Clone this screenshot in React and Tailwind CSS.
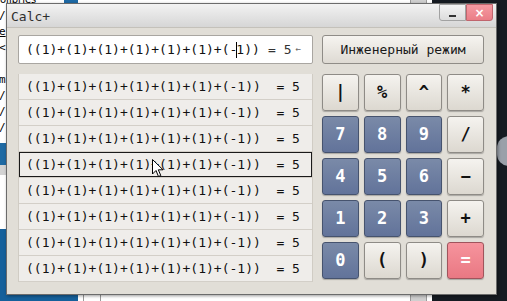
import React from 'react';

const mono = "font-['DejaVu_Sans_Mono','Liberation_Mono',monospace]";
const expr = '((1)+(1)+(1)+(1)+(1)+(1)+(-1))';

const keys = [
  { label: '|', kind: 'op' },
  { label: '%', kind: 'op' },
  { label: '^', kind: 'op' },
  { label: '*', kind: 'op' },
  { label: '7', kind: 'num' },
  { label: '8', kind: 'num' },
  { label: '9', kind: 'num' },
  { label: '/', kind: 'op' },
  { label: '4', kind: 'num' },
  { label: '5', kind: 'num' },
  { label: '6', kind: 'num' },
  { label: '−', kind: 'op' },
  { label: '1', kind: 'num' },
  { label: '2', kind: 'num' },
  { label: '3', kind: 'num' },
  { label: '+', kind: 'op' },
  { label: '0', kind: 'num' },
  { label: '(', kind: 'op' },
  { label: ')', kind: 'op' },
  { label: '=', kind: 'eq' },
];

const keyStyle = {
  op: 'bg-gradient-to-b from-[#f5f3ef] to-[#dcd8d0] border-[#8e8b86] text-[#111]',
  num: 'bg-gradient-to-b from-[#7a8aa8] to-[#62739a] border-[#46536e] text-white',
  eq: 'bg-gradient-to-b from-[#f6949d] to-[#e97883] border-[#a0545c] text-white',
};

const Desktop = () => (
  <>
    {/* windows lying behind the calculator */}
    <div className="absolute left-0 top-[-5px] text-[10px] leading-[10px] text-black font-['DejaVu_Sans',sans-serif]">olibries</div>
    <div className="absolute left-[64px] top-0 w-[14px] h-[4px] bg-[#1e6aa6]" />
    <div className={`absolute left-[-1px] top-[8px] flex flex-col text-[11px] leading-[16px] text-black ${mono}`}>
      <span>/</span>
      <span className="underline">e</span>
      <span>&lt;</span>
      <span>&nbsp;</span>
      <span>m</span>
      <span>/</span>
      <span>/</span>
      <span>/</span>
    </div>
    <div className="absolute left-0 top-[143px] w-[8px] h-[22px] bg-[#1f6aa3]" />
    <div className="absolute left-0 top-[165px] w-[8px] h-[10px] bg-[#d3d3d3]" />
    <div className="absolute left-0 top-[229px] w-[78px] h-[80px] bg-[#15609b]" />
    <div className="absolute left-[83px] top-[294px] w-[18px] h-[10px] border border-[#9a9a9a] bg-white" />
    <div className="absolute left-[410px] top-0 w-[17px] h-full bg-[#cfcfcf] border-x border-[#9b9b9b]" />
    <div className="absolute left-[432px] top-0 w-[75px] h-full bg-[#161b22]" />
    <div className="absolute left-[497px] top-[136px] w-[12px] h-[30px] rounded-l-full bg-[#9aa0a9]" />
  </>
);

const Cursor = () => (
  <svg className="absolute left-[152px] top-[159px]" width="12" height="19" viewBox="0 0 12 19">
    <path d="M0.5 0.5 L0.5 15 L4 11.5 L6.5 17.5 L8.8 16.5 L6.3 10.8 L11 10.8 Z" fill="white" stroke="black" strokeWidth="1" />
  </svg>
);

export default function App() {
  return (
    <div className="relative w-[507px] h-[301px] overflow-hidden bg-white">
      <Desktop />

      <div className="absolute left-[6px] top-[3px] w-[491px] h-[292px] flex flex-col border border-[#6b6b6b] bg-[#e1ded7] shadow-[1px_1px_3px_rgba(0,0,0,0.4)]">
        {/* title bar */}
        <div className="h-[24px] flex items-start justify-between bg-gradient-to-b from-[#f2f2f2] to-[#d6d6d6] border-b border-[#c4c1ba]">
          <span className={`pl-[4px] pt-[3px] text-[13px] text-[#2e2e2e] ${mono}`}>Calc+</span>
          <div className="flex mr-[3px]">
            <div className="w-[27px] h-[17px] flex items-end justify-center pb-[3px] bg-gradient-to-b from-[#f4f4f4] to-[#dcdcdc] border border-[#a2a2a2] rounded-bl-[3px]">
              <div className="w-[7px] h-[2px] bg-[#333]" />
            </div>
            <div className="w-[27px] h-[17px] flex items-center justify-center bg-gradient-to-b from-[#f59aa2] to-[#ea7d87] border border-[#c0656d] rounded-br-[3px] text-white text-[12px] font-bold leading-none font-['DejaVu_Sans',sans-serif]">
              ×
            </div>
          </div>
        </div>

        {/* content */}
        <div className="pl-[11px] pt-[7px] flex flex-col gap-[10px]">
          <div className="flex gap-[9px] h-[29px]">
            <div className={`w-[295px] flex items-center pl-[7px] pr-[11px] bg-white border border-[#a9a6a1] rounded-[2px] text-[13px] text-[#111] whitespace-pre ${mono}`}>
              <span>((1)+(1)+(1)+(1)+(1)+(1)+(-</span>
              <span className="inline-block w-px h-[16px] bg-black -mx-px" />
              <span>1))</span>
              <span className="ml-auto text-[#333]">= 5</span>
              <span className="ml-[4px] text-[9px] text-[#666]">←</span>
            </div>
            <div className={`w-[162px] flex items-center justify-center bg-gradient-to-b from-[#f6f4f0] to-[#dedad3] border border-[#8f8c87] rounded-[3px] text-[13px] text-[#1a1a1a] ${mono}`}>
              Инженерный режим
            </div>
          </div>

          <div className="flex gap-[9px]">
            <div className="w-[295px] h-[208px] flex flex-col border-x border-[#d0ccc4]">
              {Array.from({ length: 8 }).map((_, i) => (
                <div
                  key={i}
                  className={`h-[26px] flex items-center pl-[7px] bg-[#efedea] border-b border-[#d3cfc8] text-[13px] text-[#111] whitespace-pre ${mono} ${i === 3 ? 'ring-1 ring-inset ring-[#1a1a1a]' : ''}`}
                >
                  {expr}  = 5
                </div>
              ))}
            </div>

            <div className="w-[162px] grid grid-cols-4 grid-rows-5 gap-x-[5px] gap-y-[5px] h-[205px]">
              {keys.map((k) => (
                <div
                  key={k.label}
                  className={`flex items-center justify-center rounded-[3px] border shadow-[0_1px_1px_rgba(0,0,0,0.25)] text-[17px] font-bold ${mono} ${keyStyle[k.kind]}`}
                >
                  {k.label}
                </div>
              ))}
            </div>
          </div>
        </div>
      </div>

      <Cursor />
    </div>
  );
}
